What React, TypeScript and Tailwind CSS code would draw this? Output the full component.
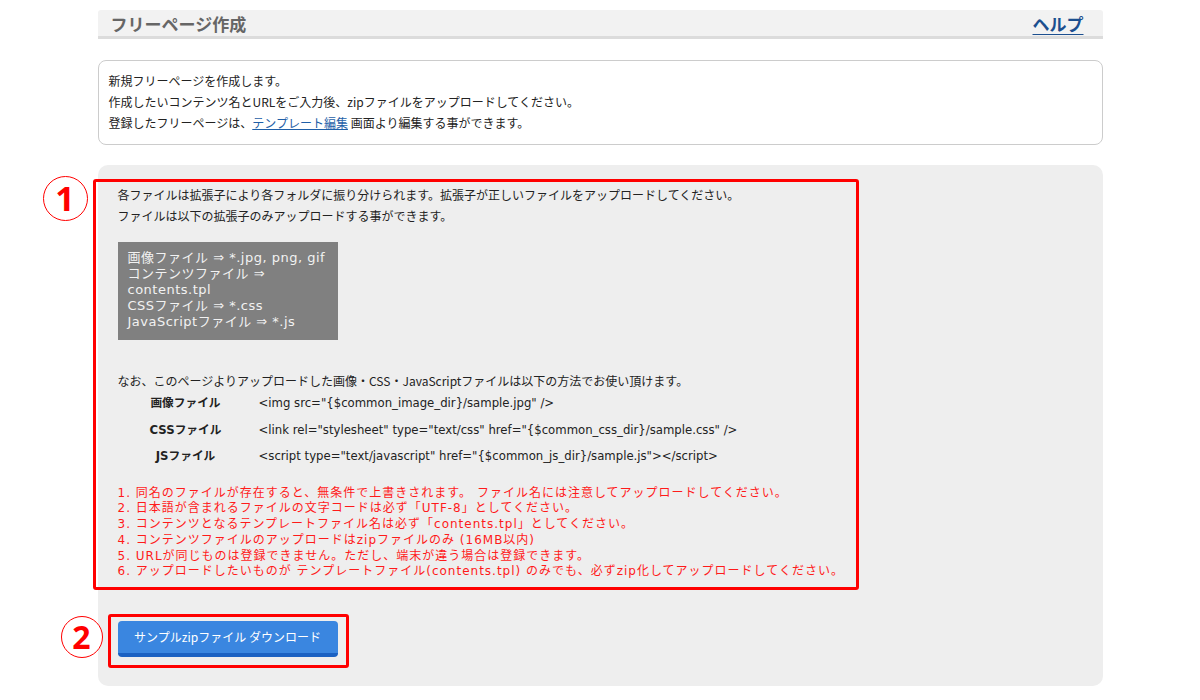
import React from "react";

const codeFont = { fontFamily: '"DejaVu Sans", "Noto Sans CJK JP", sans-serif' };

const usageRows = [
  { label: "画像ファイル", code: '<img src="{$common_image_dir}/sample.jpg" />' },
  { label: "CSSファイル", code: '<link rel="stylesheet" type="text/css" href="{$common_css_dir}/sample.css" />' },
  { label: "JSファイル", code: '<script type="text/javascript" href="{$common_js_dir}/sample.js"></script>' },
];

const notes = [
  "1. 同名のファイルが存在すると、無条件で上書きされます。 ファイル名には注意してアップロードしてください。",
  "2. 日本語が含まれるファイルの文字コードは必ず「UTF-8」としてください。",
  "3. コンテンツとなるテンプレートファイル名は必ず「contents.tpl」としてください。",
  "4. コンテンツファイルのアップロードはzipファイルのみ (16MB以内)",
  "5. URLが同じものは登録できません。ただし、端末が違う場合は登録できます。",
  "6. アップロードしたいものが テンプレートファイル(contents.tpl) のみでも、必ずzip化してアップロードしてください。",
];

const Marker = ({ n, size }: { n: string; size: string }) => (
  <div
    className={`flex items-center justify-center rounded-full border-[1.5px] border-[#ff0000] bg-white text-[#ff0000] font-bold ${size}`}
    style={{ fontFamily: '"Noto Sans", sans-serif' }}
  >
    {n}
  </div>
);

export default function App() {
  return (
    <div
      className="min-h-[700px] bg-white text-[#333]"
      style={{ fontFamily: '"Noto Sans CJK JP", sans-serif' }}
    >
      <div className="mx-auto w-[1005px] pt-[10px]">
        {/* page header */}
        <div className="flex h-[29px] items-center justify-between rounded-t-[3px] border-b-[3px] border-[#dcdcdc] bg-[#f2f2f2] pl-[13px] pr-[19px]">
          <h1 className="text-[17px] font-bold leading-none text-[#666]">フリーページ作成</h1>
          <a href="#" className="text-[17px] font-bold leading-none text-[#1c4f8f] underline underline-offset-[3px]">
            ヘルプ
          </a>
        </div>

        {/* info box */}
        <div className="mt-[21px] h-[85px] rounded-[8px] border border-[#cccccc] px-[10px] pt-[9px] text-[12px] leading-[21px] text-[#222]">
          <p>新規フリーページを作成します。</p>
          <p>作成したいコンテンツ名とURLをご入力後、zipファイルをアップロードしてください。</p>
          <p>
            登録したフリーページは、
            <a href="#" className="text-[#1f5fa8] underline">
              テンプレート編集
            </a>{" "}
            画面より編集する事ができます。
          </p>
        </div>

        {/* upload panel */}
        <div className="relative mt-[20px] rounded-[10px] bg-[#eeeeee] px-[20px] pb-[29px] pt-[19px] text-[12px] text-[#222]">
          <p className="leading-[21px]">各ファイルは拡張子により各フォルダに振り分けられます。拡張子が正しいファイルをアップロードしてください。</p>
          <p className="leading-[21px]">ファイルは以下の拡張子のみアップロードする事ができます。</p>

          <div
            className="mt-[16px] h-[98px] w-[220px] bg-[#808080] px-[10px] pt-[8px] text-[13px] leading-[16px] tracking-[0.5px] text-[#f2f2f2]"
            style={codeFont}
          >
            画像ファイル ⇒ *.jpg, png, gif
            <br />
            コンテンツファイル ⇒
            <br />
            contents.tpl
            <br />
            CSSファイル ⇒ *.css
            <br />
            JavaScriptファイル ⇒ *.js
          </div>

          <p className="mt-[30px] leading-[21px]">なお、このページよりアップロードした画像・CSS・JavaScriptファイルは以下の方法でお使い頂けます。</p>
          <div className="grid grid-cols-[136px_1fr] text-[11.7px]">
            {usageRows.map((r) => (
              <React.Fragment key={r.label}>
                <div className="flex h-[26.5px] items-center justify-center font-bold" style={codeFont}>
                  {r.label}
                </div>
                <div className="flex h-[26.5px] items-center pl-[5px]" style={codeFont}>
                  {r.code}
                </div>
              </React.Fragment>
            ))}
          </div>

          <ul className="mt-[15px] text-[12px] leading-[15.8px] tracking-[1px] text-[#ff1a1a]" style={codeFont}>
            {notes.map((n) => (
              <li key={n} className="whitespace-nowrap">
                {n}
              </li>
            ))}
          </ul>

          <button
            className="mt-[41px] h-[36px] w-[220px] rounded-[4px] border-b-[4px] border-[#1b61c2] bg-[#3a86e0] text-[12px] text-white"
          >
            サンプルzipファイル ダウンロード
          </button>

          {/* annotation overlays */}
          <div className="pointer-events-none absolute left-[-5px] top-[14px] h-[411px] w-[766px] rounded-[3px] border-[3px] border-[#ff0000]" />
          <div className="absolute left-[-55px] top-[11px]">
            <Marker n="1" size="h-[45px] w-[45px] text-[34px]" />
          </div>
          <div className="pointer-events-none absolute left-[10px] top-[449px] h-[54px] w-[241px] rounded-[3px] border-[3px] border-[#ff0000]" />
          <div className="absolute left-[-37px] top-[451px]">
            <Marker n="2" size="h-[42px] w-[42px] text-[32px]" />
          </div>
        </div>
      </div>
    </div>
  );
}
